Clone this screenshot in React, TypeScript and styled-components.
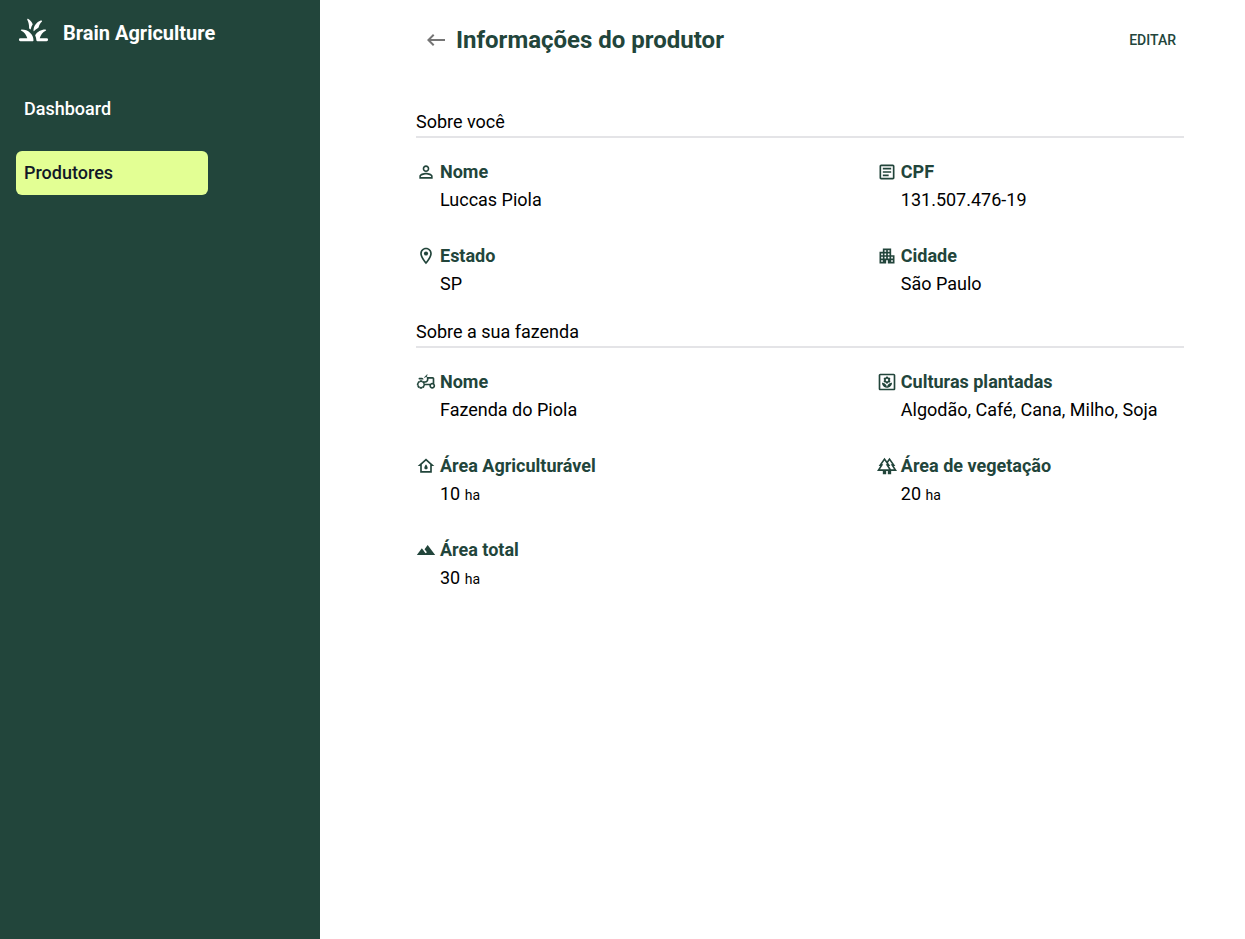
import React from "react";
import styled, { createGlobalStyle } from "styled-components";
import {
  MdApartment,
  MdKeyboardBackspace,
  MdLandscape,
  MdOutlineAgriculture,
  MdOutlineArticle,
  MdOutlineForest,
  MdOutlineLocationOn,
  MdOutlineWaterDamage,
  MdOutlineYard,
  MdPersonOutline,
} from "react-icons/md";
import type { IconType } from "react-icons";

const colors = {
  forest: "#22453b",
  lime: "#e3ff94",
  ink: "#111827",
  rule: "#e4e4e7",
};

const GlobalStyle = createGlobalStyle`
  *, *::before, *::after { box-sizing: border-box; }
  body {
    margin: 0;
    background: #fff;
    color: #000;
    font-family: Roboto, "Liberation Sans", sans-serif;
    font-size: 18px;
    line-height: 28px;
    -webkit-font-smoothing: antialiased;
  }
`;

const Layout = styled.div`
  display: flex;
  min-height: 100vh;
`;

const Sidebar = styled.aside`
  flex: 0 0 320px;
  padding: 12px 16px;
  background: ${colors.forest};
  color: #fff;
`;

const Brand = styled.div`
  display: flex;
  align-items: flex-end;
  gap: 12px;
  font-size: 20px;
  font-weight: 700;
`;

const Logo = styled.svg`
  flex: none;
  width: 35px;
  height: 35px;
  fill: currentColor;
`;

const Nav = styled.nav`
  display: flex;
  flex-direction: column;
  gap: 20px;
  width: 192px;
  margin-top: 40px;
`;

const NavLink = styled.a<{ $active?: boolean }>`
  padding: 8px;
  border-radius: 6px;
  background: ${(p) => (p.$active ? colors.lime : "transparent")};
  color: ${(p) => (p.$active ? colors.ink : "#fff")};
  font-weight: 500;
  text-decoration: none;
`;

const Main = styled.main`
  flex: 1;
  min-width: 0;
  padding: 20px 48px 20px 96px;
`;

const Content = styled.div`
  display: flex;
  flex-direction: column;
  gap: 20px;
  max-width: 768px;
`;

const Header = styled.header`
  display: flex;
  align-items: center;
  height: 40px;
  margin-bottom: 28px;
`;

const BackButton = styled.button`
  display: flex;
  padding: 8px;
  border: 0;
  background: none;
  color: #757575;
  cursor: pointer;
`;

const Title = styled.h1`
  margin: 0;
  color: ${colors.forest};
  font-size: 24px;
  line-height: 32px;
  font-weight: 700;
`;

const EditButton = styled.button`
  margin-left: auto;
  padding: 8px;
  border: 0;
  background: none;
  color: ${colors.forest};
  font: 500 14px/24px Roboto, "Liberation Sans", sans-serif;
  text-transform: uppercase;
  cursor: pointer;
`;

const Section = styled.section`
  display: flex;
  flex-direction: column;
  gap: 20px;
`;

const SectionTitle = styled.h2`
  margin: 0;
  border-bottom: 2px solid ${colors.rule};
  font-size: 18px;
  font-weight: 400;
`;

const Fields = styled.dl`
  display: grid;
  grid-template-columns: 3fr 2fr;
  row-gap: 28px;
  margin: 0;
`;

const Field = styled.div`
  min-width: 0;
`;

const Label = styled.dt`
  display: flex;
  align-items: center;
  gap: 4px;
  color: ${colors.forest};
  font-weight: 700;

  svg { flex: none; }
`;

const Value = styled.dd`
  margin: 0 0 0 24px;
`;

const Unit = styled.span`
  font-size: 14px;
  line-height: 20px;
`;

type FieldData = { icon: IconType; label: string; value: string; unit?: string };

const producer: FieldData[] = [
  { icon: MdPersonOutline, label: "Nome", value: "Luccas Piola" },
  { icon: MdOutlineArticle, label: "CPF", value: "131.507.476-19" },
  { icon: MdOutlineLocationOn, label: "Estado", value: "SP" },
  { icon: MdApartment, label: "Cidade", value: "São Paulo" },
];

const farm: FieldData[] = [
  { icon: MdOutlineAgriculture, label: "Nome", value: "Fazenda do Piola" },
  { icon: MdOutlineYard, label: "Culturas plantadas", value: "Algodão, Café, Cana, Milho, Soja" },
  { icon: MdOutlineWaterDamage, label: "Área Agriculturável", value: "10", unit: "ha" },
  { icon: MdOutlineForest, label: "Área de vegetação", value: "20", unit: "ha" },
  { icon: MdLandscape, label: "Área total", value: "30", unit: "ha" },
];

/* Tuft of grass with rounded blade tips */
function GrassLogo() {
  return (
    <Logo viewBox="0 0 24 24" aria-hidden>
      <path d="M11.3 20H3a1 1 0 0 1 0-2h4.75c-.62-2.2-2.1-4.05-4.05-5.1-.62-.34-.42-.9.22-.9C8.4 12 12 15.3 12 19.3c0 .4-.3.7-.7.7z" />
      <path d="M21 18h-4.75c.62-2.2 2.1-4.05 4.05-5.1.62-.34.42-.9-.22-.9-2.95 0-5.55 1.55-6.96 3.93.5 1.1.8 2.250.86 3.420 0 .36.3.65.66.65H21a1 1 0 0 0 0-2z" />
      <path d="M12 12.900c0-3.240 2.060-6 4.950-7 .7-.25 1.250.35.7.83-.95.85-1.600 1.950-2.020 3.300-.1.500-.4.850-.8 1.070-.92.500-1.750 1.170-2.420 1.950-.2.230-.41.150-.41-.15z" />
      <path d="M11.300 8.720c-.55.900-.95 1.900-1.170 2.950-.06.300-.25.330-.46.180l-.4-.28c-.22-.14-.3-.3-.29-.6.02-2.070-.34-3.950-1.180-5.500-.31-.6.1-1.100.67-.75 1.350.85 2.400 2.100 2.920 3.430.08.200.03.380-.09.570z" />
    </Logo>
  );
}

function InfoSection({ title, fields }: { title: string; fields: FieldData[] }) {
  return (
    <Section>
      <SectionTitle>{title}</SectionTitle>
      <Fields>
        {fields.map(({ icon: Icon, label, value, unit }) => (
          <Field key={label}>
            <Label>
              <Icon size={20} aria-hidden />
              {label}
            </Label>
            <Value>
              {value}
              {unit && <> <Unit>{unit}</Unit></>}
            </Value>
          </Field>
        ))}
      </Fields>
    </Section>
  );
}

export default function App() {
  return (
    <>
      <GlobalStyle />
      <Layout>
        <Sidebar>
          <Brand>
            <GrassLogo />
            Brain Agriculture
          </Brand>
          <Nav>
            <NavLink href="#dashboard">Dashboard</NavLink>
            <NavLink href="#produtores" $active aria-current="page">
              Produtores
            </NavLink>
          </Nav>
        </Sidebar>
        <Main>
          <Content>
            <Header>
              <BackButton type="button" aria-label="Voltar">
                <MdKeyboardBackspace size={24} aria-hidden />
              </BackButton>
              <Title>Informações do produtor</Title>
              <EditButton type="button">Editar</EditButton>
            </Header>
            <InfoSection title="Sobre você" fields={producer} />
            <InfoSection title="Sobre a sua fazenda" fields={farm} />
          </Content>
        </Main>
      </Layout>
    </>
  );
}
